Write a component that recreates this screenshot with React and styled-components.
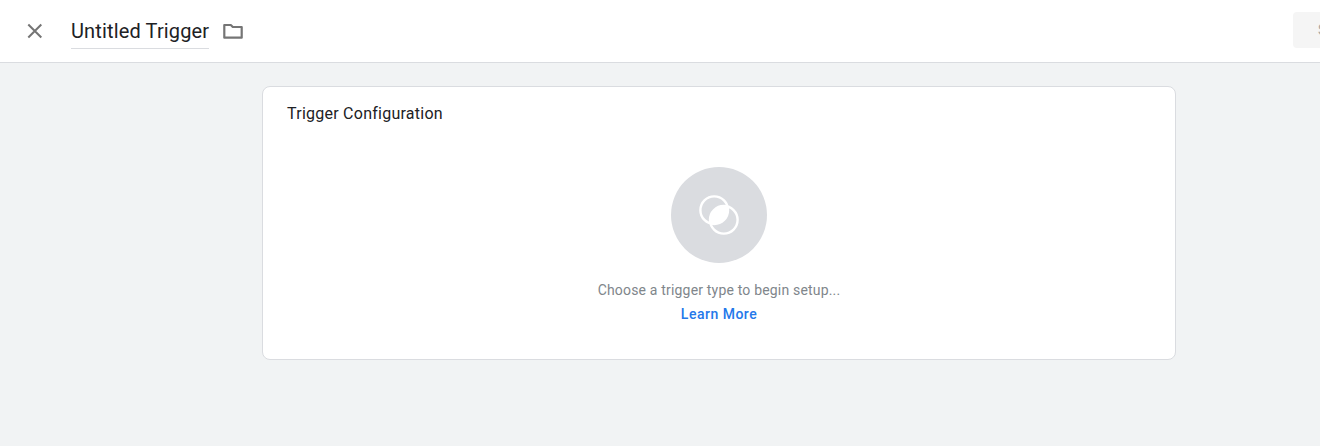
import React from "react";
import styled, { createGlobalStyle } from "styled-components";

const Global = createGlobalStyle`
  html, body { margin: 0; padding: 0; height: 100%; overflow: hidden; }
  body { background: #f1f3f4; font-family: Roboto, "Liberation Sans", sans-serif; }
`;

const Page = styled.div`
  width: 1320px;
  height: 446px;
  overflow: hidden;
  display: flex;
  flex-direction: column;
  background: #f1f3f4;
`;

const Header = styled.header`
  flex: none;
  box-sizing: border-box;
  height: 63px;
  background: #fff;
  border-bottom: 1px solid #dadce0;
  display: flex;
  align-items: center;
  padding-left: 24px;
`;

const CloseButton = styled.button`
  flex: none;
  width: 22px;
  height: 22px;
  padding: 0;
  border: 0;
  background: none;
  display: flex;
  align-items: center;
  justify-content: center;
  margin-right: 25px;
  color: #757575;
`;

const Title = styled.div`
  flex: none;
  box-sizing: border-box;
  height: 37px;
  margin-top: -1px;
  padding-top: 6px;
  font-size: 20px;
  line-height: 26px;
  letter-spacing: 0.14px;
  color: #202124;
  border-bottom: 1px solid #dadce0;
`;

const FolderButton = styled.button`
  flex: none;
  width: 24px;
  height: 24px;
  padding: 0;
  border: 0;
  background: none;
  margin-left: 12px;
  color: #757575;
  display: flex;
  align-items: center;
  justify-content: center;
`;

const SaveButton = styled.button`
  flex: none;
  box-sizing: border-box;
  width: 72px;
  height: 36px;
  margin: -2px -45px 0 auto;
  border: 0;
  border-radius: 4px;
  padding: 0 0 0 25px;
  background: #f5f5f5;
  color: #a8a8a8;
  font-family: inherit;
  font-size: 14px;
  font-weight: 500;
  text-align: left;
`;

const Content = styled.main`
  flex: 1;
  padding: 23px 0 0 262px;
`;

const Card = styled.section`
  box-sizing: border-box;
  width: 914px;
  height: 274px;
  background: #fff;
  border: 1px solid #dadce0;
  border-radius: 8px;
  display: flex;
  flex-direction: column;
  padding: 17px 24px 0;
`;

const CardTitle = styled.h2`
  margin: 0;
  font-size: 16px;
  font-weight: 400;
  line-height: 20px;
  letter-spacing: 0.25px;
  color: #202124;
`;

const Empty = styled.div`
  display: flex;
  flex-direction: column;
  align-items: center;
  margin-top: 43px;
`;

const Badge = styled.div`
  width: 96px;
  height: 96px;
  border-radius: 50%;
  background: #dadce0;
  display: flex;
  align-items: center;
  justify-content: center;
`;

const Hint = styled.p`
  margin: 18px 0 0;
  font-size: 14px;
  line-height: 18px;
  letter-spacing: 0.18px;
  color: #80868b;
`;

const LearnMore = styled.a`
  margin-top: 6px;
  font-size: 14px;
  font-weight: 500;
  line-height: 18px;
  letter-spacing: 0.5px;
  color: #2478ea;
  text-decoration: none;
`;

export default function App() {
  return (
    <Page>
      <Global />
      <Header>
        <CloseButton aria-label="Close">
          <svg width="22" height="22" viewBox="0 0 22 22" fill="none" stroke="currentColor" strokeWidth="2">
            <path d="M4.300 4.500l13 13M17.300 4.500l-13 13" />
          </svg>
        </CloseButton>
        <Title>Untitled Trigger</Title>
        <FolderButton aria-label="Folder">
          <svg width="24" height="24" viewBox="0 0 24 24" fill="none" stroke="currentColor" strokeWidth="2.200" strokeLinejoin="round">
            <path d="M3.300 18.700V6h6.500l2 2h8.900v10.700z" />
          </svg>
        </FolderButton>
        <SaveButton>Save</SaveButton>
      </Header>
      <Content>
        <Card>
          <CardTitle>Trigger Configuration</CardTitle>
          <Empty>
            <Badge>
              <svg width="48" height="48" viewBox="0 0 48 48">
                <defs>
                  <clipPath id="firstRing">
                    <circle cx="19.200" cy="19.200" r="13.800" />
                  </clipPath>
                </defs>
                <circle cx="19.200" cy="19.200" r="13.800" fill="none" stroke="#fff" strokeWidth="2.400" />
                <circle cx="28.800" cy="28.800" r="13.800" fill="none" stroke="#fff" strokeWidth="2.400" />
                <circle cx="28.800" cy="28.800" r="13.800" fill="#fff" clipPath="url(#firstRing)" />
              </svg>
            </Badge>
            <Hint>Choose a trigger type to begin setup...</Hint>
            <LearnMore href="#">Learn More</LearnMore>
          </Empty>
        </Card>
      </Content>
    </Page>
  );
}
